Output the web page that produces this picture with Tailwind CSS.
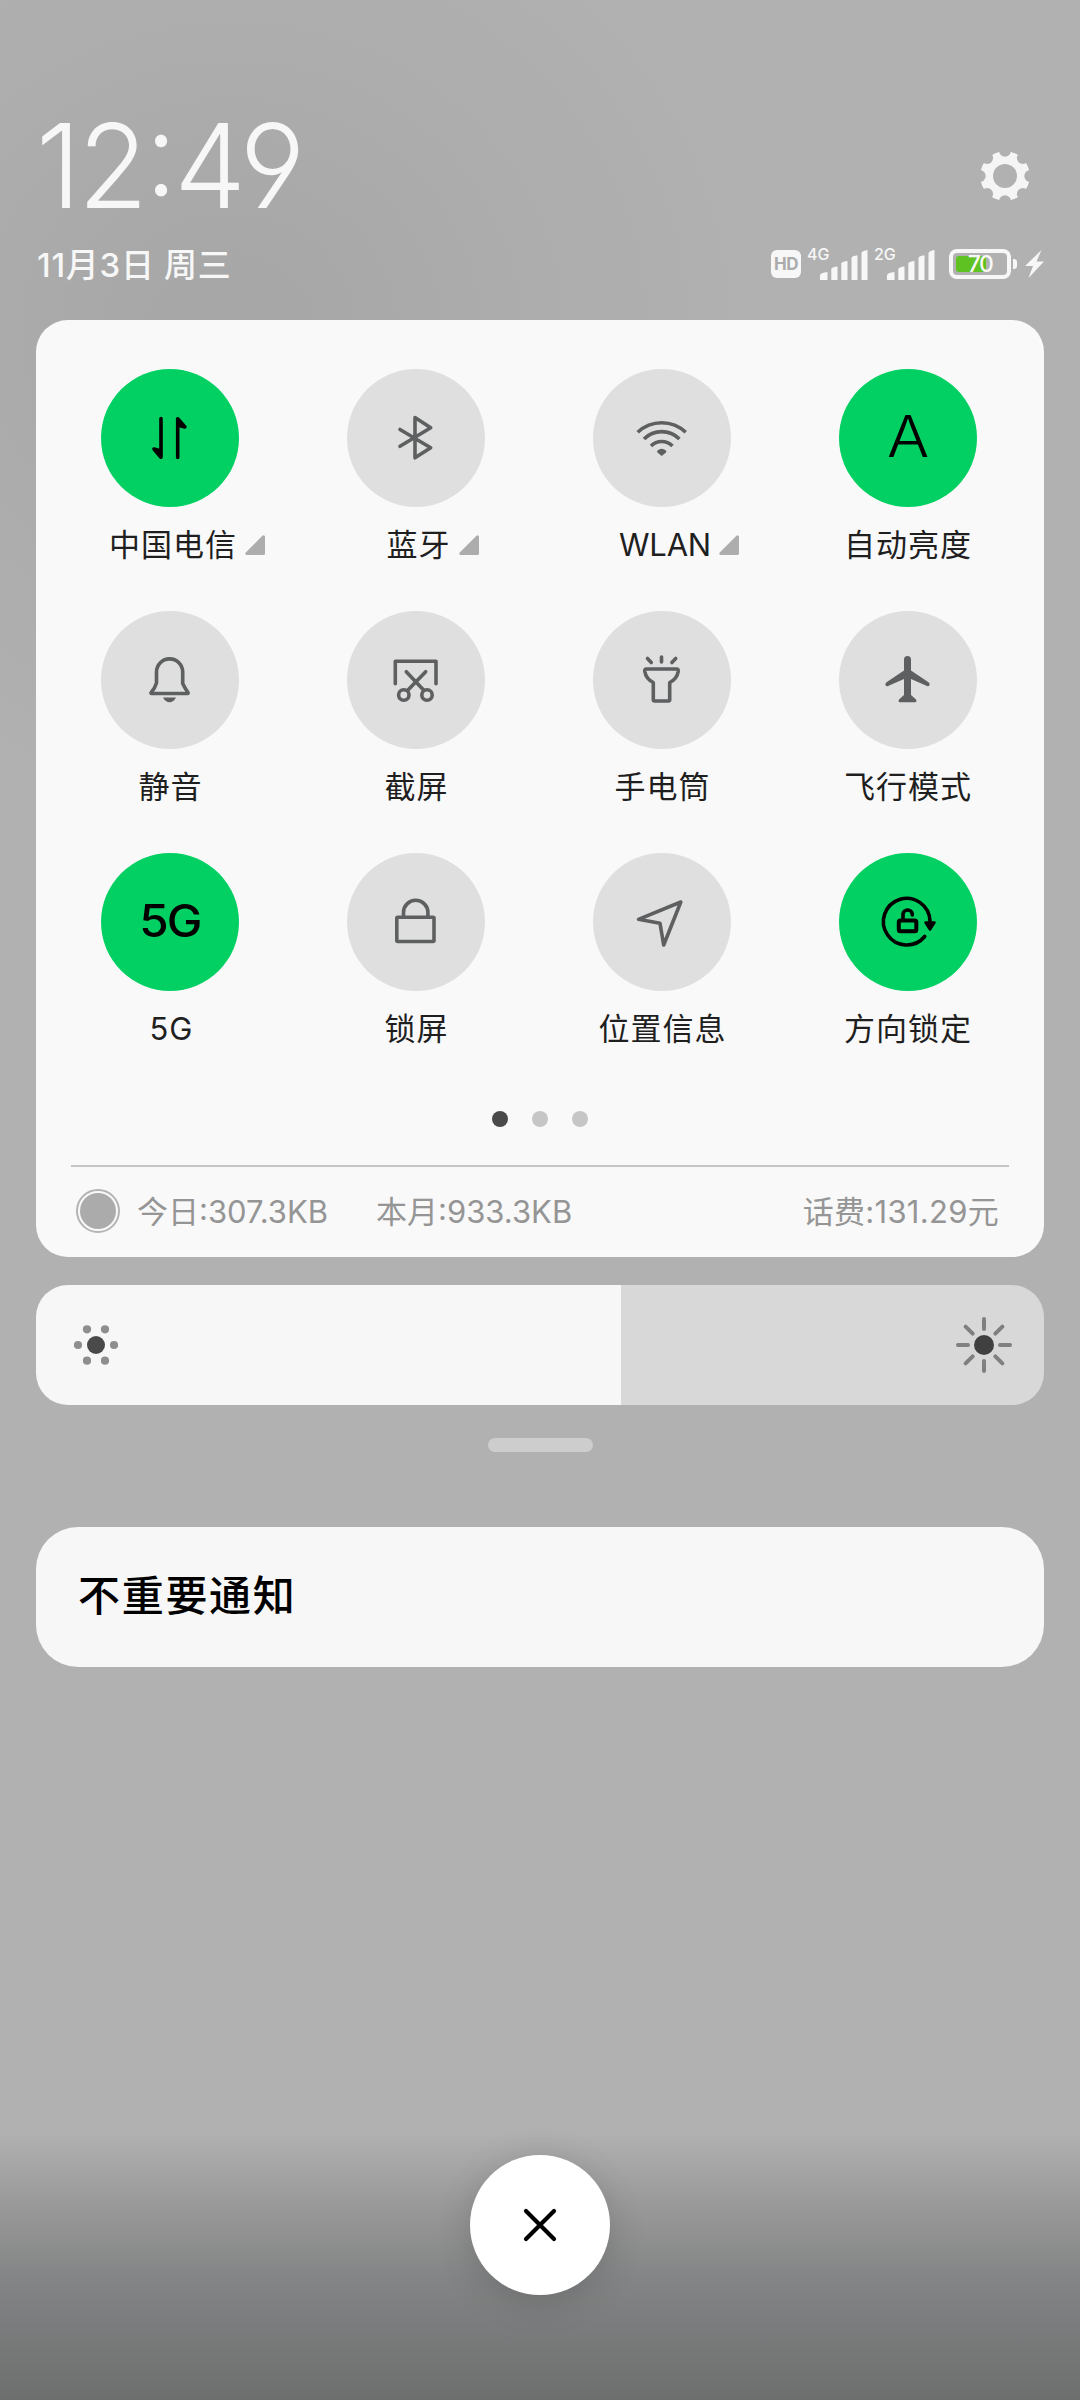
<!DOCTYPE html>
<html lang="zh-CN">
<head>
<meta charset="utf-8">
<title>控制中心</title>
<script src="https://cdn.jsdelivr.net/npm/@tailwindcss/browser@4"></script>
</head>
<body class="bg-[#b1b1b1]">
<main class="relative w-[1080px] h-[2400px] overflow-hidden flex flex-col px-9 bg-[radial-gradient(ellipse_520px_480px_at_230px_330px,#a6a6a6,transparent)] font-['Inter','Noto_Sans_CJK_SC',sans-serif] text-[#1f1f1f]">
  <div class="absolute inset-x-0 bottom-0 h-[268px] bg-[linear-gradient(to_bottom,#b1b1b1_0%,#9a9a9a_26%,#838485_55%,#6d6e6e_100%)]"></div>

  <header class="h-[320px] shrink-0 flex flex-col">
    <div class="h-[232px] flex justify-between pt-[106px]">
      <div class="h-[120px] leading-[120px] text-[117px] font-light text-[#f7f7f7] origin-left scale-x-[0.975] tracking-[-3px] [font-feature-settings:'cv04','calt']">12:49</div>
      <svg class="w-[50px] h-[50px] mt-[45px] mr-[14px]" viewBox="-25 -25 50 50">
        <mask id="teeth">
          <circle r="25" fill="#fff"/><circle r="12" fill="#000"/>
          <g fill="#000"><circle cx="25.3" r="6"/><circle cx="-25.3" r="6"/><circle cy="25.3" r="6"/><circle cy="-25.3" r="6"/><circle cx="17.9" cy="17.9" r="6"/><circle cx="-17.9" cy="17.9" r="6"/><circle cx="17.9" cy="-17.9" r="6"/><circle cx="-17.9" cy="-17.9" r="6"/></g>
        </mask>
        <circle r="25" fill="#f5f5f5" mask="url(#teeth)"/>
      </svg>
    </div>
    <div class="flex justify-between h-16 items-center text-[#f7f7f7]">
      <div class="text-[33px] font-medium leading-none whitespace-pre tracking-[0.7px] word-spacing-[2px] pt-[3px] pl-px">11月3日 周三</div>
      <div class="flex items-start h-[32px]">
        <div class="w-[30px] h-7 mt-0.5 rounded-[6px] bg-[#f7f7f7] text-[#ababab] text-[17px] font-bold leading-7 text-center tracking-[-0.5px]">HD</div>
        <div class="relative ml-[7px] w-[60px] h-8">
          <span class="absolute -left-px -top-0.5 text-[16px] leading-4 font-medium">4G</span>
          <svg class="absolute left-3 top-0 w-12 h-8" viewBox="0 0 48 32" fill="#f7f7f7"><path d="M0 32V27Q1 24.500 7.500 24V32ZM11.300 32V21Q12 19 17.500 18.500V32ZM21.300 32V15.500Q22 13.500 27.500 13V32ZM31.500 32V10Q32 8 37.500 7.300V32ZM41.500 32V5Q42 2.800 47.500 2V32Z"/></svg>
        </div>
        <div class="relative ml-[7px] w-[60px] h-8">
          <span class="absolute -left-px -top-0.5 text-[16px] leading-4 font-medium">2G</span>
          <svg class="absolute left-3 top-0 w-12 h-8" viewBox="0 0 48 32" fill="#f7f7f7"><path d="M0 32V27Q1 24.500 7.500 24V32ZM11.300 32V21Q12 19 17.500 18.500V32ZM21.300 32V15.500Q22 13.500 27.500 13V32ZM31.500 32V10Q32 8 37.500 7.300V32ZM41.500 32V5Q42 2.800 47.500 2V32Z"/></svg>
        </div>
        <div class="relative ml-[14px] mt-px w-[62px] h-[30px] rounded-[8px] border-4 border-[#f7f7f7] p-[3px]">
          <div class="h-full w-[30px] rounded-[3px] bg-[#5ec223]"></div>
          <span class="absolute inset-0 text-center text-[23px] leading-[23px] font-medium tracking-[-1.500px]">70</span>
        </div>
        <div class="ml-0.5 mt-[11px] w-1 h-2.5 rounded-r-[3px] bg-[#f7f7f7]"></div>
        <svg class="ml-2 mt-0.5 w-[19px] h-7" viewBox="0 0 19 28" fill="#f7f7f7"><path d="M16.500 0 0 16H8L3.500 28 19 11.500H11.500Z"/></svg>
      </div>
    </div>
  </header>

  <section class="h-[937px] shrink-0 rounded-[32px] bg-[#f9f9f9] flex flex-col">
    <div class="grid grid-cols-[repeat(4,246px)] auto-rows-[242px] pl-[11px] pt-[49px] [&_svg]:w-[60px] [&_svg]:h-[60px] text-[31px] tracking-[1px] leading-[38px]">
      <div class="flex flex-col items-center gap-[19px]">
        <div class="size-[138px] rounded-full bg-[#02d062] flex items-center justify-center">
          <svg viewBox="-30 -30 60 60" fill="#000" stroke="#000" stroke-width="3.600" stroke-linecap="round" stroke-linejoin="round"><path d="M-9-19.500V19.300L-16 11-9 13M7.700 19.500V-19.300L14.900-11 7.700-13"/></svg>
        </div>
        <div class="relative pl-[6px]">中国电信<svg class="absolute left-full ml-2 top-[9px] !size-5" viewBox="0 0 20 20" fill="#adadad" stroke="#adadad" stroke-width="3" stroke-linejoin="round"><path d="M18.500 1.800V18.500H1.800Z"/></svg></div>
      </div>
      <div class="flex flex-col items-center gap-[19px]">
        <div class="size-[138px] rounded-full bg-[#dfdfdf] flex items-center justify-center">
          <svg viewBox="-30 -30 60 60" fill="none" stroke="#5e5f60" stroke-width="3.600" stroke-linecap="round" stroke-linejoin="round"><path d="M-16-8.500 14.700 9.700-1 19.800V-20.500L14.700-10.300-16 8.300"/></svg>
        </div>
        <div class="relative pl-[5px]">蓝牙<svg class="absolute left-full ml-2 top-[9px] !size-5" viewBox="0 0 20 20" fill="#adadad" stroke="#adadad" stroke-width="3" stroke-linejoin="round"><path d="M18.500 1.800V18.500H1.800Z"/></svg></div>
      </div>
      <div class="flex flex-col items-center gap-[19px]">
        <div class="size-[138px] rounded-full bg-[#dfdfdf] flex items-center justify-center">
          <svg viewBox="-30 -30 60 60" fill="none" stroke="#5e5f60" stroke-width="3.600"><path d="M-24.300-5.800A35 35 0 0 1 23.700-5.800M-18 1A25 25 0 0 1 17.400 1M-11 8A15 15 0 0 1 10.400 8"/><path d="M-4.500 12.500Q-.3 9 3.900 12.500 5 13.700 3.700 14.700L-.3 18-4.300 14.700Q-5.600 13.700-4.500 12.500Z" fill="#5e5f60" stroke="none"/></svg>
        </div>
        <div class="relative pl-[6px]"><span class="tracking-[-0.200px]">WLAN</span><svg class="absolute left-full ml-2 top-[9px] !size-5" viewBox="0 0 20 20" fill="#adadad" stroke="#adadad" stroke-width="3" stroke-linejoin="round"><path d="M18.500 1.800V18.500H1.800Z"/></svg></div>
      </div>
      <div class="flex flex-col items-center gap-[19px]">
        <div class="size-[138px] rounded-full bg-[#02d062] flex items-center justify-center">
          <span class="text-[57px] leading-none font-light text-black tracking-normal scale-x-110 -mt-1">A</span>
        </div>
        <div>自动亮度</div>
      </div>

      <div class="flex flex-col items-center gap-[19px]">
        <div class="size-[138px] rounded-full bg-[#dfdfdf] flex items-center justify-center">
          <svg viewBox="-30 -30 60 60" fill="none" stroke="#5e5f60" stroke-width="3.600" stroke-linejoin="round"><path d="M-13.500 3V-8A12.900 12.900 0 0 1 12.700-8V3.500Q15 8.500 18 12.500 18.500 13.500 17.500 13.500H-18.300Q-19.500 13.500-18.800 12.500-15 8-13.500 3Z"/><path d="M-7 17.500H6Q3.500 22.300-.5 22.300-4.500 22.300-7 17.500Z" fill="#5e5f60" stroke="none"/></svg>
        </div>
        <div class="pl-px">静音</div>
      </div>
      <div class="flex flex-col items-center gap-[19px]">
        <div class="size-[138px] rounded-full bg-[#dfdfdf] flex items-center justify-center">
          <svg viewBox="-30 -30 60 60" fill="none" stroke="#5e5f60" stroke-width="3.600" stroke-linecap="round" stroke-linejoin="round"><path d="M-20.700 3.700V-18.700H20V3.700M-9.700-8.300 8 10.500M9.700-8.300-8.500 10.500"/><circle cx="-12.200" cy="15" r="5.200"/><circle cx="11" cy="15" r="5.200"/></svg>
        </div>
        <div class="pl-px">截屏</div>
      </div>
      <div class="flex flex-col items-center gap-[19px]">
        <div class="size-[138px] rounded-full bg-[#dfdfdf] flex items-center justify-center">
          <svg viewBox="-30 -30 60 60" fill="none" stroke="#5e5f60" stroke-width="3.600" stroke-linecap="round" stroke-linejoin="round"><path d="M-.5-23V-18M-14.500-21.500-10.700-17.500M13.700-21.500 9.900-17.500M-15.500-11H14.500Q16.500-11 16.200-8.500 15-1 7.700 2.500V19.500Q7.700 21 6.200 21H-7.200Q-8.700 21-8.700 19.500V2.500Q-16 -1-17.200-8.500-17.500-11-15.500-11Z"/></svg>
        </div>
        <div class="pl-px">手电筒</div>
      </div>
      <div class="flex flex-col items-center gap-[19px]">
        <div class="size-[138px] rounded-full bg-[#dfdfdf] flex items-center justify-center">
          <svg viewBox="-30 -30 60 60" fill="#5e5f60"><path d="M-4-20.500A3.500 3.500 0 0 1 3-20.500V-9.500L20.500 2.200Q22 3.300 21.500 5 20.900 6.700 19 6L3-1V15L8 19.500Q9.300 22.300 7 22.300H-8Q-10.300 22.300-9 19.500L-4 15V-1L-20 6Q-21.900 6.700-22.500 5-23 3.300-21.500 2.200L-4-9.500Z"/></svg>
        </div>
        <div>飞行模式</div>
      </div>

      <div class="flex flex-col items-center gap-[19px]">
        <div class="size-[138px] rounded-full bg-[#02d062] flex items-center justify-center">
          <span class="text-[45px] leading-none font-medium text-black tracking-[-2px] scale-x-[1.060] -mt-1">5G</span>
        </div>
        <div class="pl-[3px]">5G</div>
      </div>
      <div class="flex flex-col items-center gap-[19px]">
        <div class="size-[138px] rounded-full bg-[#dfdfdf] flex items-center justify-center">
          <svg viewBox="-30 -30 60 60" fill="none" stroke="#5e5f60" stroke-width="3.600" stroke-linejoin="round"><rect x="-19.200" y="-4.800" width="37.200" height="24.300" rx="1"/><path d="M-12.500-5V-9.500A12.200 12.200 0 0 1 11.900-9.500V-5"/></svg>
        </div>
        <div class="pl-px">锁屏</div>
      </div>
      <div class="flex flex-col items-center gap-[19px]">
        <div class="size-[138px] rounded-full bg-[#dfdfdf] flex items-center justify-center">
          <svg viewBox="-30 -30 60 60" fill="none" stroke="#5e5f60" stroke-width="3.600" stroke-linejoin="round"><path d="M18.800-20-23.500-2.700-2 1.200 1.700 23Z"/></svg>
        </div>
        <div class="pl-px">位置信息</div>
      </div>
      <div class="flex flex-col items-center gap-[19px]">
        <div class="size-[138px] rounded-full bg-[#02d062] flex items-center justify-center">
          <svg viewBox="-30 -30 60 60" fill="none" stroke="#000" stroke-width="3.600" stroke-linecap="round" stroke-linejoin="round"><path d="M16.700 14.500A23.300 23.300 0 1 1 22-1"/><path d="M17.500.5H26.500L22 7.500Z" fill="#000" stroke-width="2.500"/><rect x="-9.200" y="-1.500" width="17.500" height="10.800" rx="1.500" stroke-width="4"/><path d="M-5-2V-8A4.700 4.700 0 0 1 4.300-8V-7"/></svg>
        </div>
        <div>方向锁定</div>
      </div>
    </div>

    <div class="flex justify-center gap-6 pt-[16px]">
      <i class="size-4 rounded-full bg-[#4a4a4a]"></i><i class="size-4 rounded-full bg-[#c6c6c6]"></i><i class="size-4 rounded-full bg-[#c6c6c6]"></i>
    </div>
    <div class="mt-[38px] mx-[35px] h-0.5 bg-[#c6c6c6]"></div>
    <div class="flex-1 flex items-center pl-10 pr-[45px] text-[31px] text-[#959595]">
      <i class="-mt-0.5 size-11 rounded-full border-2 border-[#b4b4b4] p-0.5"><b class="block size-full rounded-full bg-[#ababab]"></b></i>
      <span class="ml-[17px]">今日:307.3KB</span>
      <span class="ml-[48px]">本月:933.3KB</span>
      <span class="ml-auto tracking-[0.300px]">话费:131.29元</span>
    </div>
  </section>

  <section class="mt-7 h-[120px] shrink-0 rounded-[32px] overflow-hidden bg-[#d8d8d8] flex items-center justify-between bg-[linear-gradient(to_right,#f7f7f7_585px,#d8d8d8_585px)] px-8">
    <svg class="w-14 h-14" viewBox="-28 -28 56 56" fill="#8e8e8e"><circle r="9" fill="#4a4a4a"/><circle cx="-18" r="4.100"/><circle cx="18" r="4.100"/><circle cx="-9" cy="-15.700" r="4.100"/><circle cx="9" cy="-15.700" r="4.100"/><circle cx="-9" cy="15.700" r="4.100"/><circle cx="9" cy="15.700" r="4.100"/></svg>
    <svg class="w-14 h-14" viewBox="-28 -28 56 56" stroke="#808080" stroke-width="4" stroke-linecap="round"><circle r="10" fill="#404040" stroke="none"/><path d="M0-26V-16M0 16V26M-26 0H-16M16 0H26M-18.400-18.400-11.300-11.300M18.400 18.400 11.300 11.300M-18.400 18.400-11.300 11.300M18.400-18.400 11.300-11.300"/></svg>
  </section>

  <div class="mt-[33px] h-[14px] w-[105px] self-center rounded-full bg-[#cdcdcd]"></div>

  <section class="mt-[75px] h-[140px] shrink-0 rounded-[42px] bg-[#f7f7f7] flex items-center pl-[42px] pb-[3px] text-[42px] font-medium tracking-[1.700px] text-black">不重要通知</section>

  <button class="relative mt-auto mb-[105px] size-[140px] shrink-0 self-center rounded-full bg-white shadow-[0_6px_36px_rgba(0,0,0,0.16)] flex items-center justify-center">
    <svg class="w-10 h-10" viewBox="-20 -20 40 40" stroke="#000" stroke-width="4.200" stroke-linecap="round"><path d="M-14-14 14 14M14-14-14 14"/></svg>
  </button>
</main>
</body>
</html>
